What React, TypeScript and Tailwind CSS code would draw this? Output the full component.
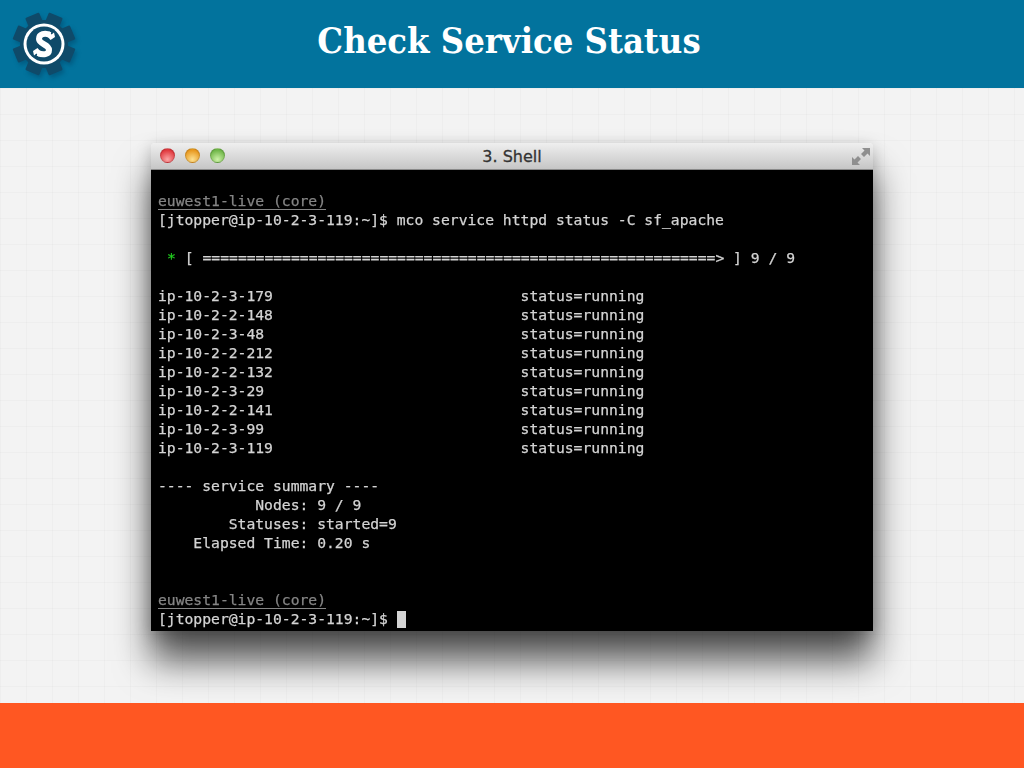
const hosts = [
  'ip-10-2-3-179',
  'ip-10-2-2-148',
  'ip-10-2-3-48',
  'ip-10-2-2-212',
  'ip-10-2-2-132',
  'ip-10-2-3-29',
  'ip-10-2-2-141',
  'ip-10-2-3-99',
  'ip-10-2-3-119',
];

const prompt = '[jtopper@ip-10-2-3-119:~]$';

function Logo() {
  const teeth = [0, 45, 90, 135, 180, 225, 270, 315];
  return (
    <svg width="70" height="70" viewBox="0 0 70 70" className="drop-shadow-[2px_3px_2px_rgba(0,50,80,0.35)]">
      <g fill="#0f4a69">
        <circle cx="35" cy="35" r="24" />
        {teeth.map((a) => (
          <rect key={a} x="27.5" y="4" width="15" height="14" rx="1" transform={`rotate(${a + 22.5} 35 35)`} />
        ))}
      </g>
      <circle cx="35" cy="35" r="20.5" fill="#ffffff" />
      <circle cx="35" cy="35" r="17.5" fill="#0f4a69" />
      <path
        d="M41 26 C36 23.500 30 25 30 30 C30 35.500 40 35 40 41 C40 45.500 34 46.500 29 44"
        fill="none"
        stroke="#ffffff"
        strokeWidth="6"
      />
      <path d="M40 22 L42.500 25.500 L45 23.500 L46 28 L41.500 31 L38 27 Z" fill="#ffffff" />
      <path d="M30 48 L27.500 44.500 L25 46.500 L24 42 L28.500 39 L32 43 Z" fill="#ffffff" />
    </svg>
  );
}

function TrafficLight({ className }: { className: string }) {
  return <div className={`h-[15px] w-[15px] rounded-full border border-black/15 ${className}`} />;
}

function Line({ children }: { children?: React.ReactNode }) {
  return <div className="h-[19px] whitespace-pre">{children}</div>;
}

function HostLine() {
  return <span className="text-[#858585] underline underline-offset-[3px]">euwest1-live (core)</span>;
}

export default function App() {
  return (
    <div className="flex h-[768px] w-[1024px] flex-col overflow-hidden bg-[#f1f1f1]">
      {/* Header */}
      <header className="relative flex h-[88px] shrink-0 items-center justify-center bg-[#02739d] pb-[8px] pr-[6px]">
        <div className="absolute left-[9px] top-[9px]">
          <Logo />
        </div>
        <h1 className="font-['DejaVu_Serif_Condensed','DejaVu_Serif',serif] text-[36px] font-bold leading-none text-white">
          Check Service Status
        </h1>
      </header>

      {/* Slide body */}
      <main className="flex flex-1 justify-center bg-[#f3f3f3] bg-[linear-gradient(rgba(0,0,0,0.02)_1px,transparent_1px),linear-gradient(90deg,rgba(0,0,0,0.02)_1px,transparent_1px)] bg-[size:26px_26px] pt-[55px]">
        <div className="h-[488px] w-[722px] overflow-hidden rounded-t-[4px] shadow-[0_30px_36px_rgba(0,0,0,0.66),0_4px_16px_rgba(0,0,0,0.22)]">
          {/* Title bar */}
          <div className="relative flex h-[27px] items-center justify-center border-b border-[#8a8a8a] bg-gradient-to-b from-[#efefef] to-[#c6c6c6] pt-[2px]">
            <div className="absolute left-[9px] top-[5px] flex gap-[10px]">
              <TrafficLight className="bg-[radial-gradient(circle_at_50%_80%,#fba5a5,#e0383d_75%)]" />
              <TrafficLight className="bg-[radial-gradient(circle_at_50%_80%,#fde08f,#e8981f_75%)]" />
              <TrafficLight className="bg-[radial-gradient(circle_at_50%_80%,#cdf2a8,#6fb648_75%)]" />
            </div>
            <span className="font-['DejaVu_Sans',sans-serif] text-[16px] leading-none text-[#333333] [-webkit-text-stroke:0.3px_#333333]">3. Shell</span>
            <svg width="20" height="20" viewBox="0 0 20 20" className="absolute right-[2px] top-[3px]" fill="#8f8f8f">
              <path d="M11 2 H19 V10 L16.500 7.500 L13 11 L10 8 L13.500 4.500 Z" />
              <path d="M1 11 V19 H9 L6.500 16.500 L10 13 L7 10 L3.500 13.500 Z" />
            </svg>
          </div>

          {/* Terminal */}
          <div className="h-[461px] bg-black px-[7px] pt-[21px] font-['DejaVu_Sans_Mono',monospace] text-[14.7px] leading-[19px] text-[#d4d4d4] [-webkit-text-stroke:0.25px] blur-[0.4px]">
            <Line><HostLine /></Line>
            <Line>{`${prompt} mco service httpd status -C sf_apache`}</Line>
            <Line />
            <Line>
              <span className="ml-[9px] text-[#22d01f]">*</span>
              <span className="ml-[9px]">{`[ ${'='.repeat(58)}> ] 9 / 9`}</span>
            </Line>
            <Line />
            {hosts.map((h) => (
              <Line key={h}>{`${h.padEnd(41)}status=running`}</Line>
            ))}
            <Line />
            <Line>---- service summary ----</Line>
            <Line>{'           Nodes: 9 / 9'}</Line>
            <Line>{'        Statuses: started=9'}</Line>
            <Line>{'    Elapsed Time: 0.20 s'}</Line>
            <Line />
            <Line />
            <Line><HostLine /></Line>
            <Line>
              {`${prompt} `}
              <span className="inline-block h-[17px] w-[9px] bg-[#d4d4d4] align-[-4px]" />
            </Line>
          </div>
        </div>
      </main>

      {/* Footer */}
      <footer className="h-[65px] shrink-0 bg-[#ff5722]" />
    </div>
  );
}
